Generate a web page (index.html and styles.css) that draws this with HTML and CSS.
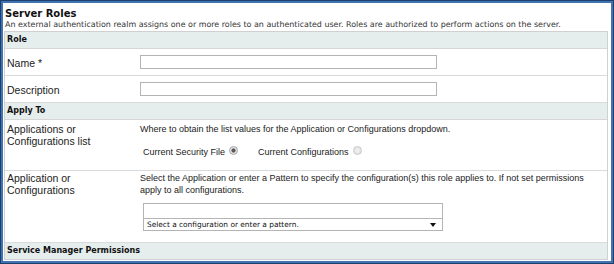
FILE: index.html
```html
<!DOCTYPE html>
<html lang="en">
<head>
    <meta charset="UTF-8">
    <title>Server Roles</title>
    <link rel="stylesheet" href="styles.css">
</head>
<body>
    <div class="frame">
        <div class="page-head">
            <h1>Server Roles</h1>
            <p>An external authentication realm assigns one or more roles to an authenticated user. Roles are authorized to perform actions on the server.</p>
        </div>

        <div class="form-box">
            <div class="section">Role</div>
            <div class="row row-input">
                <div class="label">Name *</div>
                <div class="value"><div class="text-input"></div></div>
            </div>
            <div class="row row-input">
                <div class="label">Description</div>
                <div class="value"><div class="text-input"></div></div>
            </div>

            <div class="section">Apply To</div>
            <div class="row row-list">
                <div class="label">Applications or<br>Configurations list</div>
                <div class="value">
                    <p class="hint">Where to obtain the list values for the Application or Configurations dropdown.</p>
                    <div class="radio-row">
                        <span class="radio-label">Current Security File</span>
                        <span class="radio checked"></span>
                        <span class="radio-label">Current Configurations</span>
                        <span class="radio"></span>
                    </div>
                </div>
            </div>
            <div class="row row-config">
                <div class="label">Application or<br>Configurations</div>
                <div class="value">
                    <p class="hint">Select the Application or enter a Pattern to specify the configuration(s) this role applies to. If not set permissions apply to all configurations.</p>
                    <div class="combo">
                        <div class="combo-input"></div>
                        <div class="combo-select">
                            <span>Select a configuration or enter a pattern.</span>
                            <span class="arrow"></span>
                        </div>
                    </div>
                </div>
            </div>

            <div class="section last">Service Manager Permissions</div>
        </div>
    </div>
</body>
</html>
```

FILE: styles.css
```css
body {
    margin: 0;
    background: #ffffff;
}
.frame {
    width: 614px;
    height: 264px;
    box-sizing: border-box;
    border: 1px solid #1c3f6c;
    box-shadow: inset 0 0 0 2px #3f73b2;
    padding: 3px 6px 0 3px;
    overflow: hidden;
    color: #222;
}
.page-head h1 {
    font-family: "DejaVu Sans", sans-serif;
    font-size: 10px;
    font-weight: bold;
    line-height: 12px;
    margin: 4px 0 0 1px;
    color: #111;
}
.page-head p {
    font-family: "DejaVu Sans", sans-serif;
    font-size: 7.95px;
    line-height: 10px;
    margin: 0 0 0 1px;
    color: #333;
}
.form-box {
    width: 604px;
    box-sizing: border-box;
    margin-top: 1px;
    border: 1px solid #d0d0d0;
    border-bottom: none;
    font-family: "Liberation Sans", Arial, sans-serif;
}
.section {
    height: 16px;
    line-height: 16px;
    padding-left: 2px;
    background: #e5eded;
    border-bottom: 1px solid #d6d6d6;
    font-family: "DejaVu Sans", sans-serif;
    font-size: 8px;
    font-weight: bold;
    color: #111;
}
.section.last {
    border-bottom: 1px solid #d0d0d0;
}
.row {
    display: flex;
    border-bottom: 1px solid #dadada;
}
.label {
    width: 135px;
    flex-shrink: 0;
    padding-left: 2px;
    box-sizing: border-box;
    font-size: 10.5px;
    line-height: 12px;
    color: #222;
}
.value {
    flex: 1;
}
.row-input {
    height: 26px;
    align-items: center;
}
.row-input .label {
    margin-top: 1px;
}
.text-input {
    width: 297px;
    height: 14px;
    box-sizing: border-box;
    border: 1px solid #b4b4b4;
    background: #fff;
}
.hint {
    margin: 0;
    padding-right: 18px;
    font-size: 9px;
    line-height: 12px;
    color: #222;
}
.row-list {
    height: 50px;
}
.row-list .label,
.row-list .hint {
    padding-top: 3px;
}
.radio-row {
    display: flex;
    align-items: center;
    margin: 11px 0 0 3px;
    font-size: 9px;
    line-height: 12px;
}
.radio-label {
    margin-right: 4px;
}
.radio {
    width: 7px;
    height: 7px;
    border-radius: 50%;
    border: 1px solid #c8c8c8;
    background: radial-gradient(circle, #f4f4f4 0, #dcdcdc 100%);
    margin-right: 20px;
    margin-bottom: 3px;
}
.radio.checked {
    border-color: #a8a8a8;
    background: radial-gradient(circle, #5a5a5a 0, #5a5a5a 1.8px, #e8e8e8 2.4px, #d0d0d0 100%);
}
.row-config {
    height: 71px;
}
.row-config .label,
.row-config .hint {
    padding-top: 1px;
}
.combo {
    width: 298px;
    margin: 7px 0 0 3px;
    border: 1px solid #b4b4b4;
}
.combo-input {
    height: 14px;
    border-bottom: 1px solid #b4b4b4;
}
.combo-select {
    height: 11px;
    display: flex;
    align-items: center;
    justify-content: space-between;
    padding: 0 6px 0 3px;
    font-family: "DejaVu Sans", sans-serif;
    font-size: 7.4px;
    color: #111;
}
.arrow {
    width: 0;
    height: 0;
    border-left: 3px solid transparent;
    border-right: 3px solid transparent;
    border-top: 4px solid #111;
}
```
